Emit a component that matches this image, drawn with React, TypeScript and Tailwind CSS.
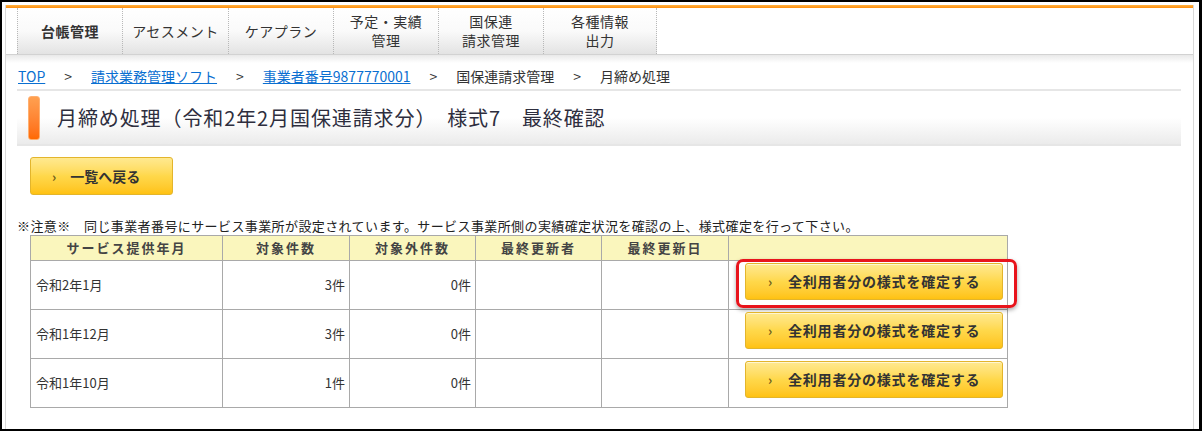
import React from 'react';

const font = "font-['Noto_Sans_CJK_JP','Noto_Sans',sans-serif]";

const tabs = [
  { lines: ['台帳管理'], w: 'w-[105px]', bold: true },
  { lines: ['アセスメント'], w: 'w-[106px]' },
  { lines: ['ケアプラン'], w: 'w-[105px]' },
  { lines: ['予定・実績', '管理'], w: 'w-[105px]' },
  { lines: ['国保連', '請求管理'], w: 'w-[105px]' },
  { lines: ['各種情報', '出力'], w: 'w-[114px]' },
];

const rows = [
  { month: '令和2年1月', target: '3件', other: '0件', highlight: true },
  { month: '令和1年12月', target: '3件', other: '0件' },
  { month: '令和1年10月', target: '1件', other: '0件' },
];

const Arrow = () => <span className="text-[13px] text-[#6b5a1a] font-bold leading-none">›</span>;

const YellowButton: React.FC<{ label: string; className?: string }> = ({ label, className = '' }) => (
  <button
    className={`flex items-center rounded-[3px] border border-[#e3b52c] bg-gradient-to-b from-[#ffe98f] via-[#ffd84a] to-[#ffc20f] text-[#333] font-bold shadow-[inset_0_1px_0_rgba(255,255,255,0.6)] ${className}`}
  >
    {label && <Arrow />}
    <span>{label}</span>
  </button>
);

export default function App() {
  return (
    <div className={`w-[1202px] h-[431px] bg-white border-2 border-r-[3px] border-black overflow-hidden ${font}`}>
      <div className="ml-[3px] mt-[3px] w-[1189px] h-[424px] border-l border-r border-[#d9d9d9]">
        {/* orange top line */}
        <div className="h-[3px] bg-gradient-to-b from-[#ffb340] to-[#ff8c00]" />

        {/* nav */}
        <div className="h-[47px] flex pl-[11px] border-b border-[#d2d2d2]">
          {tabs.map((t, i) => (
            <div
              key={i}
              className={`${t.w} h-full flex flex-col items-center justify-center border-l border-dotted border-[#b8b8b8] ${
                i === tabs.length - 1 ? 'border-r' : ''
              } bg-gradient-to-b from-white via-[#fafafa] to-[#e3e3e3] text-[14px] leading-[19px] text-[#333] tracking-[0.5px] ${
                t.bold ? 'font-bold' : ''
              }`}
            >
              {t.lines.map((l) => (
                <span key={l}>{l}</span>
              ))}
            </div>
          ))}
        </div>
        <div className="h-[8px] bg-gradient-to-b from-[#e9e9e9] to-white" />

        {/* breadcrumb */}
        <div className="h-[26px] flex items-center pl-[12px] text-[14px] text-[#333]">
          <a className="text-[#0a6fd1] underline">TOP</a>
          <span className="mx-[19px]">&gt;</span>
          <a className="text-[#0a6fd1] underline">請求業務管理ソフト</a>
          <span className="mx-[19px]">&gt;</span>
          <a className="text-[#0a6fd1] underline">事業者番号9877770001</a>
          <span className="mx-[19px]">&gt;</span>
          <span>国保連請求管理</span>
          <span className="mx-[19px]">&gt;</span>
          <span>月締め処理</span>
        </div>

        {/* title */}
        <div className="ml-[11px] mr-[12px] border-t-2 border-b-2 border-[#e6e6e6] h-[57px] flex items-center bg-gradient-to-b from-white via-white to-[#ebebeb]">
          <div className="ml-[11px] w-[12px] h-[44px] rounded-[3px] bg-gradient-to-b from-[#ffa050] to-[#ff6a00] border border-[#ffb070]" />
          <div className="ml-[17px] text-[20px] text-[#2e2e3e] tracking-[0.9px]">
            月締め処理（令和2年2月国保連請求分）　様式7　最終確認
          </div>
        </div>

        {/* back button */}
        <div className="ml-[24px] mt-[11px]">
          <button className="w-[143px] h-[38px] flex items-center rounded-[3px] border border-[#e3b52c] bg-gradient-to-b from-[#ffe98f] via-[#ffd84a] to-[#ffc20f] text-[#333] text-[14px] font-bold">
            <span className="ml-[21px] mr-[14px]">
              <Arrow />
            </span>
            一覧へ戻る
          </button>
        </div>

        {/* note */}
        <div className="mt-[22px] ml-[11px] text-[13px] leading-[18px] text-[#222] tracking-[0.4px]">
          ※注意※　同じ事業者番号にサービス事業所が設定されています。サービス事業所側の実績確定状況を確認の上、様式確定を行って下さい。
        </div>

        {/* table */}
        <table className="ml-[24px] border-collapse text-[13px] text-[#333]">
          <thead>
            <tr className="h-[25px] bg-[#faf6bd]">
              <th className="w-[192px] border border-[#a9a9a9] font-bold tracking-[2px] text-[#444]">サービス提供年月</th>
              <th className="w-[127px] border border-[#a9a9a9] font-bold tracking-[2px] text-[#444]">対象件数</th>
              <th className="w-[126px] border border-[#a9a9a9] font-bold tracking-[2px] text-[#444]">対象外件数</th>
              <th className="w-[126px] border border-[#a9a9a9] font-bold tracking-[2px] text-[#444]">最終更新者</th>
              <th className="w-[127px] border border-[#a9a9a9] font-bold tracking-[2px] text-[#444]">最終更新日</th>
              <th className="w-[279px] border border-[#a9a9a9]" />
            </tr>
          </thead>
          <tbody>
            {rows.map((r) => (
              <tr key={r.month} className="h-[49px]">
                <td className="border border-[#a9a9a9] pl-[5px]">{r.month}</td>
                <td className="border border-[#a9a9a9] pr-[4px] text-right">{r.target}</td>
                <td className="border border-[#a9a9a9] pr-[4px] text-right">{r.other}</td>
                <td className="border border-[#a9a9a9]" />
                <td className="border border-[#a9a9a9]" />
                <td className="border border-[#a9a9a9] pl-[16px] pr-[3px] align-top relative">
                  <YellowButton
                    label="全利用者分の様式を確定する"
                    className="mt-[2px] mb-[9px] w-[258px] h-[37px] pl-[22px] gap-[15px] text-[14px] tracking-[0.8px]"
                  />
                  {r.highlight && (
                    <div className="absolute left-[7px] top-[-2px] w-[281px] h-[49px] rounded-[7px] border-[3px] border-[#e8141c] shadow-[0_2px_4px_rgba(0,0,0,0.35)] pointer-events-none" />
                  )}
                </td>
              </tr>
            ))}
          </tbody>
        </table>
      </div>
    </div>
  );
}
